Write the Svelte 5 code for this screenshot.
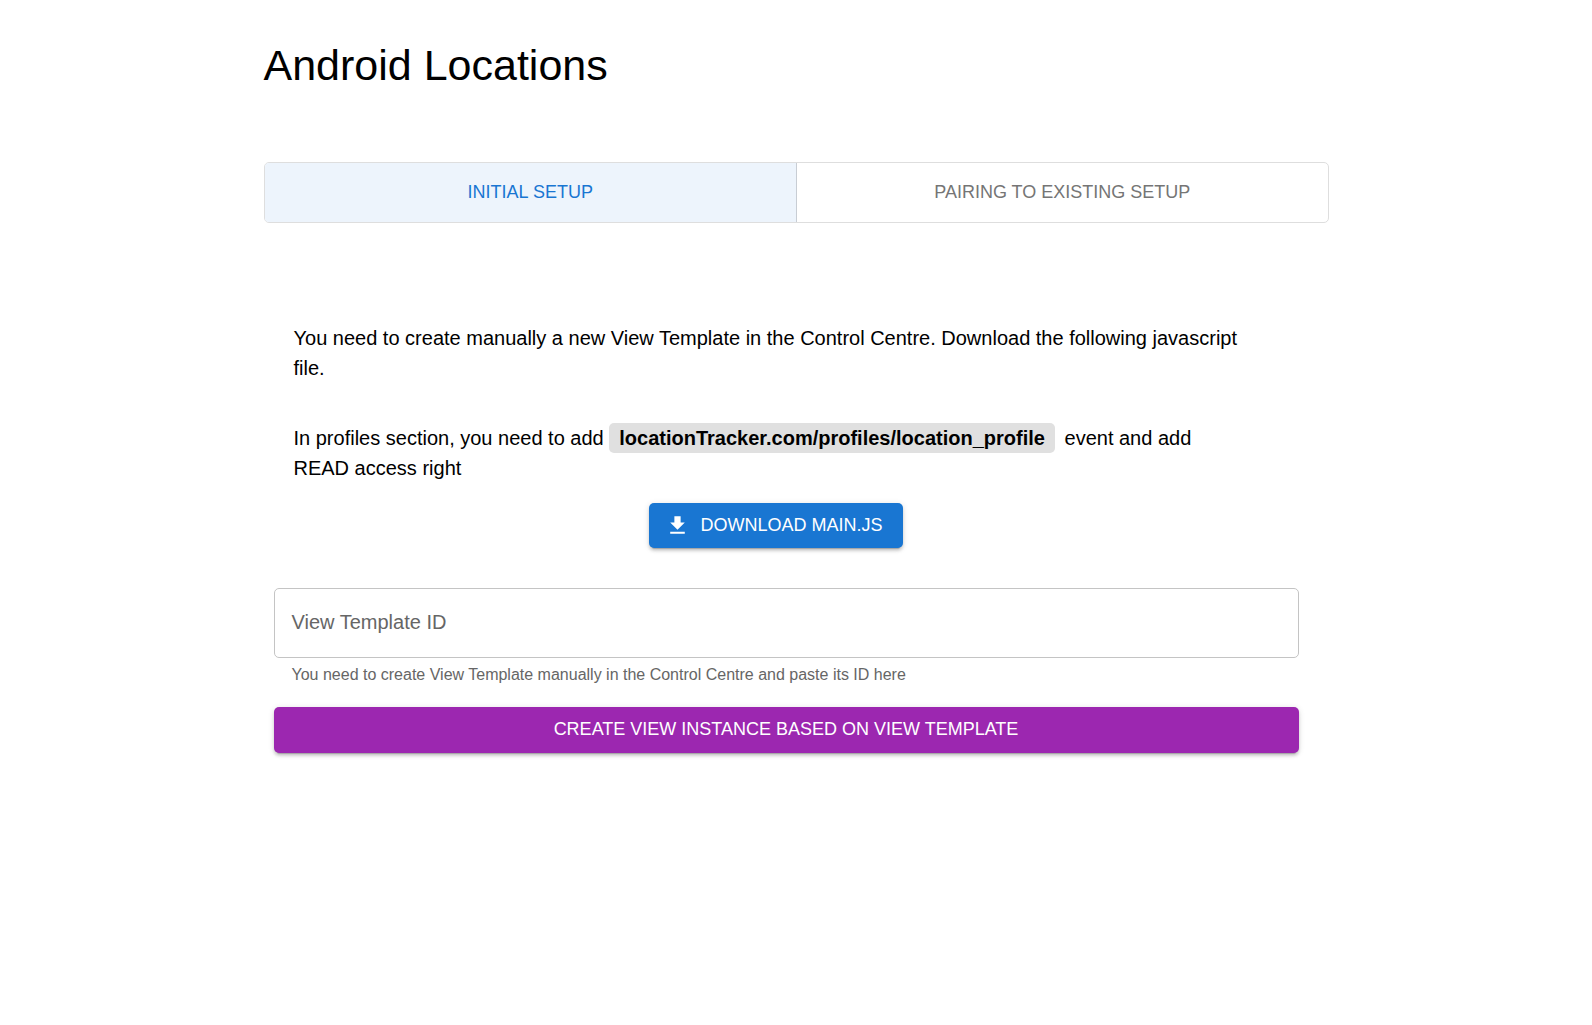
<script>
  let mode = $state('initial');
  let templateId = $state('');

  const modes = [
    { id: 'initial', label: 'INITIAL SETUP' },
    { id: 'pairing', label: 'PAIRING TO EXISTING SETUP' }
  ];
</script>

<main class="page">
  <h1>Android Locations</h1>

  <div class="toggle" role="group" aria-label="Setup mode">
    {#each modes as item (item.id)}
      <button
        type="button"
        class:selected={mode === item.id}
        aria-pressed={mode === item.id}
        onclick={() => (mode = item.id)}>{item.label}</button>
    {/each}
  </div>

  <section class="setup">
    <div class="guide">
      <p>
        You need to create manually a new View Template in the Control Centre. Download the following
        javascript file.
      </p>
      <p>
        In profiles section, you need to add <strong class="chip">locationTracker.com/profiles/location_profile</strong>
        event and add READ access right
      </p>
      <button type="button" class="action primary">
        <svg viewBox="0 0 24 24" aria-hidden="true">
          <path d="M5 20h14v-2H5v2zM19 9h-4V3H9v6H5l7 7 7-7z" />
        </svg>
        DOWNLOAD MAIN.JS
      </button>
    </div>

    <form onsubmit={(event) => event.preventDefault()}>
      <div class="field">
        <input id="template-id" type="text" bind:value={templateId} aria-describedby="template-help" />
        <label for="template-id" class:filled={templateId !== ''}>View Template ID</label>
      </div>
      <p id="template-help" class="help">
        You need to create View Template manually in the Control Centre and paste its ID here
      </p>
      <button type="submit" class="action secondary">CREATE VIEW INSTANCE BASED ON VIEW TEMPLATE</button>
    </form>
  </section>
</main>

<style>
  :global(body) {
    margin: 0;
    background: #fff;
  }

  .page {
    box-sizing: border-box;
    max-width: 1105px;
    margin: 0 auto;
    padding: 40px 20px;
    color: #000;
    font-family: 'Liberation Sans', Arial, sans-serif;
    font-size: 20px;
    line-height: 30px;
  }

  h1 {
    margin: 0 0 72px;
    font-size: 43px;
    font-weight: 400;
    line-height: 50px;
  }

  button {
    font-family: inherit;
    font-size: 18px;
    cursor: pointer;
  }

  .toggle {
    display: grid;
    grid-template-columns: 1fr 1fr;
    overflow: hidden;
    border: 1px solid #dedede;
    border-radius: 5px;
  }

  .toggle button {
    padding: 14px;
    border: 0;
    background: transparent;
    color: #757575;
    line-height: 31px;
  }

  .toggle button + button {
    border-left: 1px solid #c8cdd4;
  }

  .toggle .selected {
    background: #edf4fc;
    color: #1976d2;
  }

  .setup {
    padding: 100px 30px 0 10px;
  }

  .guide {
    display: flex;
    flex-direction: column;
    padding: 0 40px 40px 20px;
  }

  .guide p {
    max-width: 950px;
    margin: 0 0 40px;
  }

  .guide p + p {
    margin-bottom: 20px;
  }

  .chip {
    display: inline-block;
    margin-right: 4px;
    padding: 0 10px;
    border-radius: 5px;
    background: #e0e0e0;
  }

  .action {
    display: flex;
    align-items: center;
    justify-content: center;
    gap: 10px;
    padding: 7px 20px 9px;
    border: 0;
    border-radius: 5px;
    color: #fff;
    line-height: 30px;
    box-shadow:
      0 4px 1px -3px rgba(0, 0, 0, 0.2),
      0 3px 3px 0 rgba(0, 0, 0, 0.14),
      0 1px 6px 0 rgba(0, 0, 0, 0.12);
  }

  .action svg {
    width: 25px;
    height: 25px;
    fill: currentColor;
  }

  .primary {
    align-self: center;
    padding: 7px 20px 8px 16px;
    background: #1976d2;
  }

  .secondary {
    width: 100%;
    background: #9c27b0;
  }

  .field {
    display: grid;
    align-items: center;
  }

  .field input,
  .field label {
    grid-area: 1 / 1;
  }

  .field input {
    box-sizing: border-box;
    width: 100%;
    height: 70px;
    padding: 0 18px 2px;
    border: 1px solid #c4c4c4;
    border-radius: 5px;
    background: transparent;
    font: inherit;
  }

  .field label {
    padding: 0 18px 2px;
    color: #666;
    pointer-events: none;
  }

  .field .filled {
    visibility: hidden;
  }

  .help {
    margin: 4px 18px 20px;
    color: #666;
    font-size: 16px;
    line-height: 25px;
  }
</style>
